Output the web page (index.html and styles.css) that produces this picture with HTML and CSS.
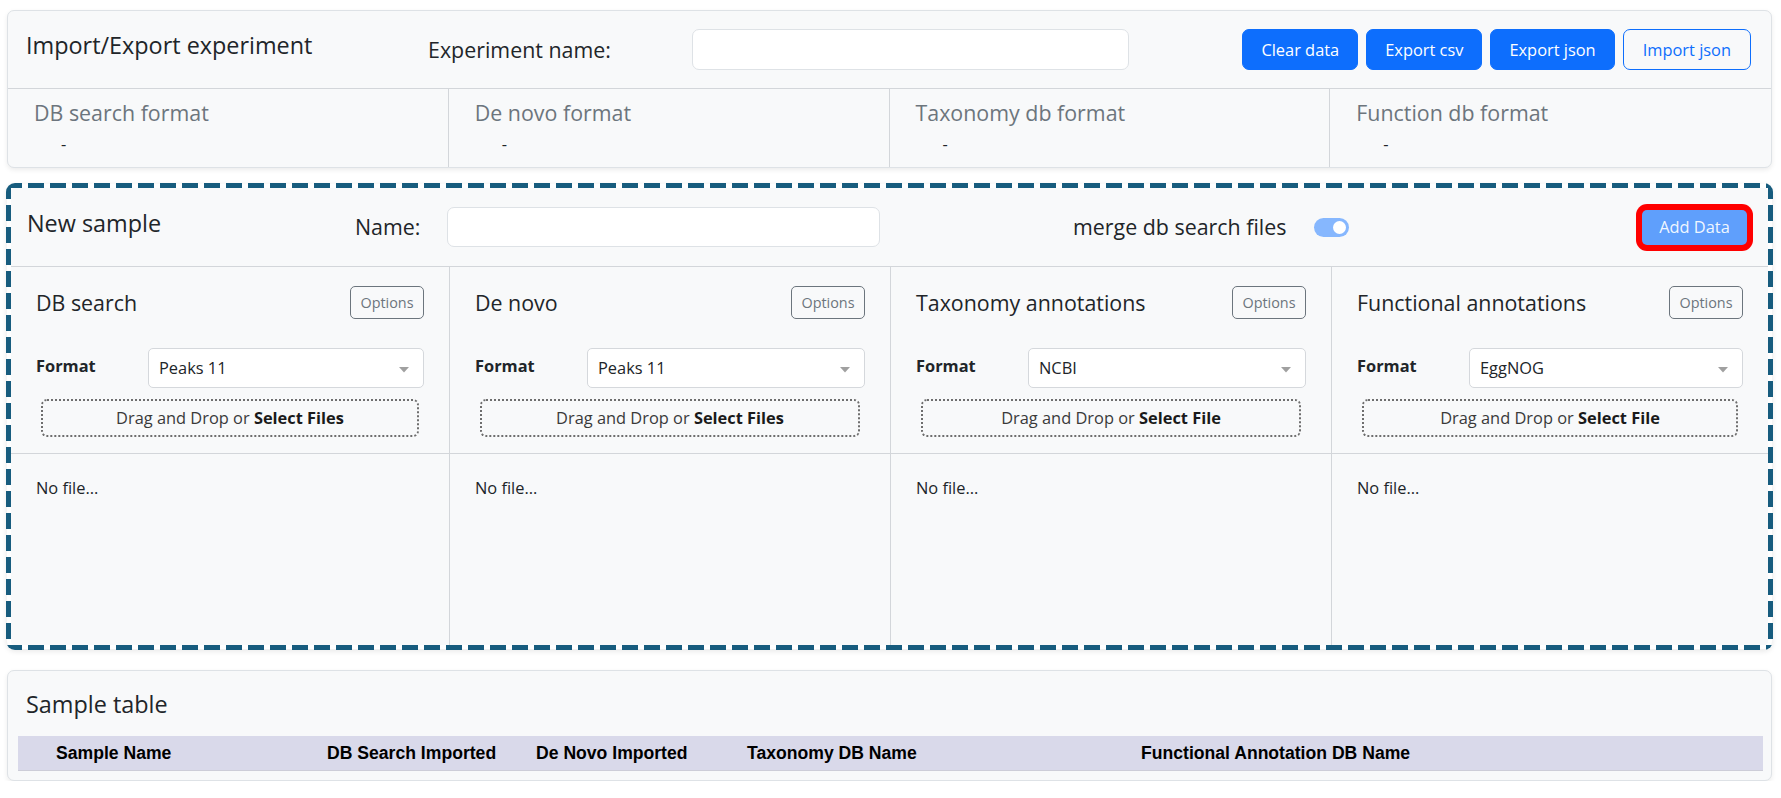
FILE: index.html
```html
<!DOCTYPE html>
<html lang="en">
<head>
<meta charset="utf-8">
<title>Experiment</title>
<link rel="stylesheet" href="styles.css">
</head>
<body>
<main class="page">
  <section class="card io-card">
    <header class="io-header">
      <h4 class="card-title">Import/Export experiment</h4>
      <label class="field-label" for="exp-name">Experiment name:</label>
      <input id="exp-name" class="text-input" type="text">
      <div class="actions">
        <button class="btn btn-primary">Clear data</button>
        <button class="btn btn-primary">Export csv</button>
        <button class="btn btn-primary">Export json</button>
        <button class="btn btn-outline">Import json</button>
      </div>
    </header>
    <div class="format-row">
      <div class="format-cell"><h5 class="format-title">DB search format</h5><div class="format-value">-</div></div>
      <div class="format-cell"><h5 class="format-title">De novo format</h5><div class="format-value">-</div></div>
      <div class="format-cell"><h5 class="format-title">Taxonomy db format</h5><div class="format-value">-</div></div>
      <div class="format-cell"><h5 class="format-title">Function db format</h5><div class="format-value">-</div></div>
    </div>
  </section>

  <section class="card sample-card">
    <header class="sample-header">
      <h4 class="card-title sample-title">New sample</h4>
      <label class="field-label name-label" for="sample-name">Name:</label>
      <input id="sample-name" class="text-input sample-input" type="text">
      <div class="merge">
        <span class="field-label">merge db search files</span>
        <span class="switch"><span class="knob"></span></span>
      </div>
      <button class="btn btn-add">Add Data</button>
    </header>
    <div class="sample-grid">
      <div class="col-top">
        <div class="col-head"><h5 class="col-title">DB search</h5><button class="btn-options">Options</button></div>
        <div class="format-select-row"><span class="format-label">Format</span><div class="select"><span>Peaks 11</span><svg class="caret" width="10" height="6" viewBox="0 0 10 6"><path d="M0 0H10L5 5.5Z" fill="#a0a0a0"/></svg></div></div>
        <div class="dropzone">Drag and Drop or&nbsp;<b>Select Files</b></div>
      </div>
      <div class="col-top">
        <div class="col-head"><h5 class="col-title">De novo</h5><button class="btn-options">Options</button></div>
        <div class="format-select-row"><span class="format-label">Format</span><div class="select"><span>Peaks 11</span><svg class="caret" width="10" height="6" viewBox="0 0 10 6"><path d="M0 0H10L5 5.5Z" fill="#a0a0a0"/></svg></div></div>
        <div class="dropzone">Drag and Drop or&nbsp;<b>Select Files</b></div>
      </div>
      <div class="col-top">
        <div class="col-head"><h5 class="col-title">Taxonomy annotations</h5><button class="btn-options">Options</button></div>
        <div class="format-select-row"><span class="format-label">Format</span><div class="select"><span>NCBI</span><svg class="caret" width="10" height="6" viewBox="0 0 10 6"><path d="M0 0H10L5 5.5Z" fill="#a0a0a0"/></svg></div></div>
        <div class="dropzone">Drag and Drop or&nbsp;<b>Select File</b></div>
      </div>
      <div class="col-top">
        <div class="col-head"><h5 class="col-title">Functional annotations</h5><button class="btn-options">Options</button></div>
        <div class="format-select-row"><span class="format-label">Format</span><div class="select"><span>EggNOG</span><svg class="caret" width="10" height="6" viewBox="0 0 10 6"><path d="M0 0H10L5 5.5Z" fill="#a0a0a0"/></svg></div></div>
        <div class="dropzone">Drag and Drop or&nbsp;<b>Select File</b></div>
      </div>
      <div class="col-bottom">No file...</div>
      <div class="col-bottom">No file...</div>
      <div class="col-bottom">No file...</div>
      <div class="col-bottom">No file...</div>
    </div>
  </section>

  <section class="card table-card">
    <h4 class="card-title table-title">Sample table</h4>
    <div class="table-head">
      <div class="th">Sample Name</div>
      <div class="th">DB Search Imported</div>
      <div class="th">De Novo Imported</div>
      <div class="th">Taxonomy DB Name</div>
      <div class="th">Functional Annotation DB Name</div>
    </div>
  </section>
</main>
</body>
</html>
```

FILE: styles.css
```css
* { box-sizing: border-box; }
html, body { margin: 0; padding: 0; background: #ffffff; }
body {
  font-family: "Open Sans", "Noto Sans", sans-serif;
  font-size: 16.4px;
  line-height: 26.4px;
  color: #212529;
}
h4, h5 { margin: 0; font-weight: 400; }
button { font-family: inherit; cursor: pointer; }

.page {
  width: 1765px;
  margin-left: 7px;
  padding-top: 10px;
}

.card {
  background: #f8f9fa;
  border: 1px solid #dee2e6;
  border-radius: 7px;
  box-shadow: 0 2px 5px rgba(0, 0, 0, 0.08);
}

.card-title {
  font-size: 23.4px;
  line-height: 30px;
  margin-bottom: 10px;
}

.field-label {
  font-size: 21.4px;
  line-height: 26px;
}

.text-input {
  height: 41px;
  background: #ffffff;
  border: 1px solid #dee2e6;
  border-radius: 7px;
  font: inherit;
  padding: 0 12px;
}

/* ---------- Import / Export card ---------- */
.io-card {
  height: 158px;
  display: flex;
  flex-direction: column;
}
.io-header {
  height: 78px;
  flex: none;
  border-bottom: 1px solid #d3d6da;
  display: grid;
  grid-template-columns: 402px 264px 437px 1fr;
  align-items: center;
  padding: 0 20px 0 18px;
}
.io-header .text-input { width: 437px; }
.actions {
  justify-self: end;
  display: flex;
  gap: 8px;
}
.btn {
  height: 41px;
  padding: 0 18px;
  border-radius: 7px;
  font-size: 16.4px;
  line-height: 26px;
  border: 1px solid transparent;
}
.btn-primary { background: #0d6efd; border-color: #0d6efd; color: #ffffff; }
.btn-outline { background: transparent; border-color: #0d6efd; color: #0d6efd; padding: 0 19px; }

.format-row {
  flex: 1;
  display: grid;
  grid-template-columns: repeat(4, 1fr);
}
.format-cell {
  padding: 11px 0 0 26px;
  border-right: 1px solid #d3d6da;
}
.format-cell:last-child { border-right: none; }
.format-title {
  font-size: 21.4px;
  line-height: 26px;
  color: #6c757d;
  margin-bottom: 5px;
}
.format-value { padding-left: 27px; }

/* ---------- New sample card ---------- */
.sample-card {
  position: relative;
  margin: 15px -1px 0;
  height: 467px;
  border: 5px solid transparent;
  border-radius: 9px;
  background-clip: padding-box;
  display: flex;
  flex-direction: column;
}
.sample-card::before {
  content: "";
  position: absolute;
  top: -5px;
  left: -5px;
  right: -5px;
  bottom: -5px;
  border-radius: 9px;
  pointer-events: none;
  background:
    repeating-linear-gradient(90deg, #175c7e 0 16px, transparent 16px 22px) left top / 100% 5px no-repeat,
    repeating-linear-gradient(90deg, #175c7e 0 16px, transparent 16px 22px) left bottom / 100% 5px no-repeat,
    repeating-linear-gradient(180deg, #175c7e 0 16px, transparent 16px 22px) left top / 5px 100% no-repeat,
    repeating-linear-gradient(180deg, #175c7e 0 16px, transparent 16px 22px) right top / 5px 100% no-repeat;
}
.sample-header {
  height: 79px;
  flex: none;
  border-bottom: 1px solid #d3d6da;
  display: flex;
  align-items: center;
  padding: 0 21px 0 16px;
}
.sample-title { width: 328px; flex: none; margin-bottom: 8px; }
.name-label { width: 92px; flex: none; }
.sample-input { width: 433px; flex: none; height: 40px; }
.merge {
  margin-left: 193px;
  display: flex;
  align-items: center;
  gap: 28px;
}
.switch {
  width: 35px;
  height: 19px;
  border-radius: 10px;
  background: #86b7fe;
  display: flex;
  align-items: center;
  justify-content: flex-end;
  padding-right: 3px;
}
.knob {
  width: 13px;
  height: 13px;
  border-radius: 50%;
  background: #ffffff;
}
.btn-add {
  margin-left: auto;
  width: 105px;
  height: 35px;
  padding: 0;
  border: none;
  border-radius: 5px;
  background: #5f9ffc;
  color: rgba(255, 255, 255, 0.92);
  box-shadow: 0 0 0 6px #ff0000;
}

.sample-grid {
  flex: 1;
  display: grid;
  grid-template-columns: 439px 441px 441px 1fr;
  grid-template-rows: 187px 1fr;
}
.col-top {
  padding: 19px 25px 16px 25px;
  border-bottom: 1px solid #d3d6da;
  border-right: 1px solid #d3d6da;
}
.col-top:nth-child(4) { border-right: none; }
.col-head {
  height: 33px;
  display: flex;
  align-items: center;
  justify-content: space-between;
}
.col-title {
  font-size: 21.4px;
  line-height: 26px;
}
.btn-options {
  width: 74px;
  height: 33px;
  padding: 0;
  background: transparent;
  border: 1px solid #6c757d;
  border-radius: 5px;
  color: #6c757d;
  font-size: 14.4px;
}
.format-select-row {
  margin-top: 29px;
  height: 40px;
  display: flex;
  align-items: center;
}
.format-label {
  width: 112px;
  flex: none;
  font-weight: 700;
  margin-top: -3px;
}
.select {
  flex: 1;
  height: 40px;
  background: #ffffff;
  border: 1px solid #d5d8dc;
  border-radius: 5px;
  display: flex;
  align-items: center;
  justify-content: space-between;
  padding: 0 14px 0 10px;
}
.caret { margin-top: 3px; }
.dropzone {
  margin: 11px 5px 0;
  height: 38px;
  border: 2px dotted #6e6e6e;
  border-radius: 6px;
  display: flex;
  align-items: center;
  justify-content: center;
  color: #3a3a3a;
}
.dropzone b { color: #1a1a1a; }
.col-bottom {
  padding: 21px 25px;
  border-right: 1px solid #d3d6da;
}
.col-bottom:last-child { border-right: none; }

/* ---------- Sample table card ---------- */
.table-card {
  margin-top: 20px;
  height: 111px;
  padding: 0 8px 0 10px;
}
.table-title {
  height: 65px;
  margin: 0;
  padding-left: 8px;
  display: flex;
  align-items: center;
}
.table-head {
  height: 35px;
  background: #d9d9ea;
  border-bottom: 1px solid #cdcdd8;
  display: grid;
  grid-template-columns: 271px 209px 211px 394px 1fr;
  align-items: center;
  padding-left: 38px;
  font-family: "Liberation Sans", Arial, sans-serif;
  font-weight: 700;
  font-size: 17.6px;
  color: #000000;
}
```
